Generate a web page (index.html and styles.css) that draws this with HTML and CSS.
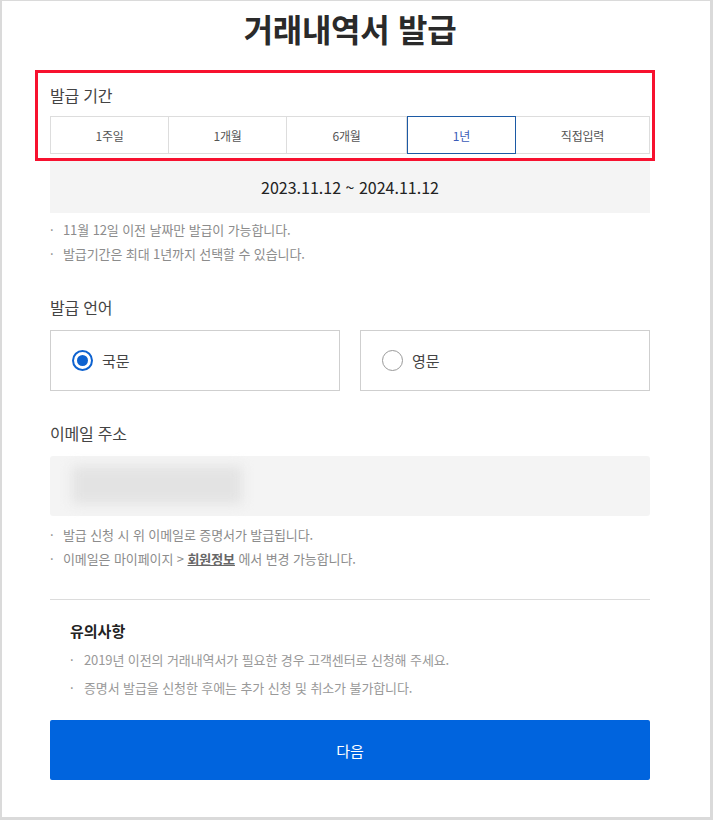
FILE: index.html
```html
<!DOCTYPE html>
<html lang="ko">
<head>
<meta charset="utf-8">
<title>거래내역서 발급</title>
<link rel="stylesheet" href="styles.css">
</head>
<body>
<div class="frame">
  <div class="content">
    <h1 class="title">거래내역서 발급</h1>
    <section class="period">
      <div class="section-label">발급 기간</div>
      <div class="tabs">
        <button class="tab">1주일</button>
        <button class="tab">1개월</button>
        <button class="tab">6개월</button>
        <button class="tab active">1년</button>
        <button class="tab">직접입력</button>
      </div>
      <div class="highlight"></div>
    </section>
    <div class="date-box">2023.11.12 ~ 2024.11.12</div>
    <ul class="bullets">
      <li>11월 12일 이전 날짜만 발급이 가능합니다.</li>
      <li>발급기간은 최대 1년까지 선택할 수 있습니다.</li>
    </ul>

    <div class="section-label lang-label">발급 언어</div>
    <div class="radios">
      <label class="radio-box">
        <span class="radio checked"></span>
        <span class="radio-text">국문</span>
      </label>
      <label class="radio-box">
        <span class="radio"></span>
        <span class="radio-text">영문</span>
      </label>
    </div>

    <div class="section-label email-label">이메일 주소</div>
    <div class="email-box"><div class="email-blur"></div></div>
    <ul class="bullets email-bullets">
      <li>발급 신청 시 위 이메일로 증명서가 발급됩니다.</li>
      <li>이메일은 마이페이지 &gt; <a class="link">회원정보</a> 에서 변경 가능합니다.</li>
    </ul>

    <hr class="divider">

    <div class="notice">
      <div class="notice-title">유의사항</div>
      <ul class="bullets notice-list">
        <li>2019년 이전의 거래내역서가 필요한 경우 고객센터로 신청해 주세요.</li>
        <li>증명서 발급을 신청한 후에는 추가 신청 및 취소가 불가합니다.</li>
      </ul>
    </div>

    <button class="next-btn">다음</button>
  </div>
</div>
</body>
</html>
```

FILE: styles.css
```css
* { box-sizing: border-box; }
html, body { margin: 0; padding: 0; }
body {
  font-family: "Noto Sans CJK KR", "Noto Sans", sans-serif;
  color: #333;
  background: #fff;
}
.frame {
  width: 713px;
  height: 820px;
  border: 2px solid #dadada;
  border-top-width: 1px;
  border-right-width: 3px;
  border-bottom-width: 3px;
  overflow: hidden;
}
.content {
  width: 600px;
  margin-left: 48px;
}
.title {
  margin: 7px 0 0;
  text-align: center;
  font-size: 32px;
  line-height: 40px;
  font-weight: 700;
  letter-spacing: -0.3px;
  color: #2a2a2a;
}
.period {
  position: relative;
  margin-top: 37px;
}
.section-label {
  font-size: 16px;
  line-height: 20px;
  color: #444;
  letter-spacing: -0.2px;
}
.tabs {
  display: grid;
  grid-template-columns: 119px 118px 120px 109px 134px;
  margin-top: 11px;
  height: 38px;
}
.tab {
  font-family: inherit;
  font-size: 12px;
  color: #555;
  background: #fff;
  border: 1px solid #ddd;
  border-left: none;
  padding: 0;
  margin: 0;
  letter-spacing: -0.2px;
}
.tab:first-child { border-left: 1px solid #ddd; }
.tab.active {
  border: 1px solid #1c5aa5;
  color: #3c5cb8;
}
.highlight {
  position: absolute;
  top: -15px;
  left: -15px;
  right: -5px;
  bottom: -7px;
  border: 3px solid #f7112f;
  pointer-events: none;
}
.date-box {
  margin-top: 7px;
  height: 52px;
  background: #f4f4f4;
  display: flex;
  align-items: center;
  justify-content: center;
  font-size: 16px;
  color: #222;
}
.bullets {
  list-style: none;
  margin: 5px 0 0;
  padding: 0;
}
.bullets li {
  position: relative;
  padding-left: 13px;
  font-size: 13px;
  line-height: 24px;
  color: #8c8c8c;
  letter-spacing: -0.1px;
}
.bullets li::before {
  content: "·";
  position: absolute;
  left: 0;
  top: 0;
  color: #888;
}
.lang-label { margin-top: 31px; }
.radios {
  display: grid;
  grid-template-columns: 290px 290px;
  column-gap: 20px;
  margin-top: 13px;
}
.radio-box {
  height: 61px;
  border: 1px solid #cfcfcf;
  display: flex;
  align-items: center;
  padding-left: 21px;
  gap: 9px;
}
.radio {
  width: 21px;
  height: 21px;
  border-radius: 50%;
  border: 1.5px solid #999;
  display: flex;
  align-items: center;
  justify-content: center;
}
.radio.checked {
  border: 2px solid #0d62d0;
}
.radio.checked::after {
  content: "";
  width: 11px;
  height: 11px;
  border-radius: 50%;
  background: #0d62d0;
}
.radio-text {
  font-size: 15px;
  color: #444;
}
.email-label { margin-top: 32px; }
.email-box {
  margin-top: 13px;
  height: 60px;
  background: #f4f4f4;
  border-radius: 3px;
  padding: 10px 0 0 22px;
}
.email-blur {
  width: 170px;
  height: 38px;
  background: #e3e3e3;
  filter: blur(6px);
}
.email-bullets { margin-top: 7px; }
.email-bullets li { line-height: 23.5px; }
.link {
  font-weight: 700;
  color: #666;
  text-decoration: underline;
}
.divider {
  margin: 29px 0 0;
  border: none;
  border-top: 1px solid #dcdcdc;
  height: 0;
}
.notice {
  padding-left: 20px;
  margin-top: 21px;
}
.notice-title {
  font-size: 15px;
  line-height: 20px;
  font-weight: 700;
  color: #222;
}
.notice-list { margin-top: 5px; }
.notice-list li {
  line-height: 28px;
  padding-left: 14px;
  color: #999;
}
.next-btn {
  display: block;
  width: 600px;
  height: 60px;
  margin-top: 18px;
  border: none;
  border-radius: 2px;
  background: #0064de;
  color: #fff;
  font-family: inherit;
  font-size: 15px;
}
```
